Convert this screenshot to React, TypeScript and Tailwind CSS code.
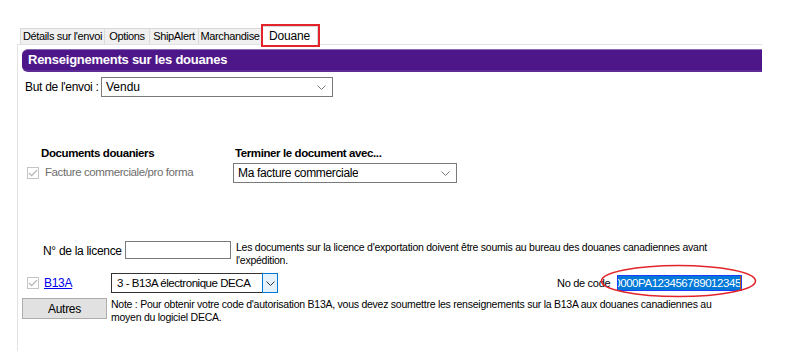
import React from "react";

const TABS = [
  { label: "Détails sur l'envoi", w: "w-[85px]" },
  { label: "Options", w: "w-[46px]" },
  { label: "ShipAlert", w: "w-[50px]" },
  { label: "Marchandise", w: "w-[64px]" },
];

const Chevron = ({ color = "#7a7a7a" }: { color?: string }) => (
  <svg width="9" height="5" viewBox="0 0 9 5" className="block">
    <path d="M0.5 0.5 L4.5 4.5 L8.5 0.5" fill="none" stroke={color} strokeWidth="1" />
  </svg>
);

const Select = ({ value, className }: { value: string; className: string }) => (
  <div className={`flex items-center justify-between border border-[#7a7a7a] bg-white pl-[4px] pr-[6px] text-[12px] text-black shrink-0 ${className}`}>
    <span className="truncate">{value}</span>
    <Chevron />
  </div>
);

const DisabledCheck = () => (
  <div className="w-[12px] h-[12px] border border-[#c4c4c4] bg-white flex items-center justify-center shrink-0">
    <svg width="10" height="8" viewBox="0 0 10 8">
      <path d="M1 4 L3.7 6.7 L9 1.2" fill="none" stroke="#b2b2b2" strokeWidth="1.2" />
    </svg>
  </div>
);

export default function App() {
  return (
    <div className="relative w-[787px] h-[363px] bg-white overflow-hidden text-black" style={{ fontFamily: '"Liberation Sans", Arial, sans-serif' }}>
      {/* tab strip */}
      <div className="flex items-end h-[44px] pl-[20px]">
        {TABS.map((t) => (
          <div
            key={t.label}
            className={`${t.w} h-[16px] flex items-center justify-center border border-b-0 border-[#d9d9d9] -ml-px first:ml-0 bg-[#f0f0f0] text-[11px] tracking-[-0.35px] leading-none whitespace-nowrap`}
          >
            {t.label}
          </div>
        ))}
        <div className="relative w-[57px] h-[19px] -ml-px mb-[-1px] flex items-center justify-center border border-b-0 border-[#d9d9d9] bg-white text-[12px] tracking-[-0.2px] leading-none z-10">
          Douane
          <span className="absolute left-[-1px] top-[-3px] w-[59px] h-[23px] border-2 border-[#e3242b]" />
        </div>
      </div>

      {/* panel */}
      <div className="ml-[17px] w-[745px] h-[307px] border-l border-t border-[#e3e3e3]">
        <div className="ml-[4px] mt-[4px] h-[23px] rounded-l-[6px] bg-[#4e1789] border-t border-[#8d6cb3] border-b-2 border-b-[#5d2b96] flex items-center pl-[6px]">
          <span className="text-white font-bold text-[13px] tracking-[-0.25px] whitespace-nowrap">Renseignements sur les douanes</span>
        </div>

        {/* But de l'envoi */}
        <div className="flex items-center mt-[5px] h-[20px]">
          <span className="ml-[7px] w-[76px] shrink-0 text-[12px] tracking-[-0.3px] whitespace-nowrap">But de l'envoi :</span>
          <Select value="Vendu" className="w-[232px] h-[20px]" />
        </div>

        {/* Documents */}
        <div className="flex mt-[50px] h-[14px] items-center text-[11.5px] font-bold tracking-[-0.4px] whitespace-nowrap">
          <span className="ml-[23px] w-[194px] shrink-0">Documents douaniers</span>
          <span>Terminer le document avec...</span>
        </div>
        <div className="flex items-center mt-[2px] h-[20px]">
          <div className="ml-[9px]">
            <DisabledCheck />
          </div>
          <span className="ml-[6px] w-[188px] shrink-0 text-[11.5px] text-[#6d6d6d] tracking-[-0.4px] whitespace-nowrap">Facture commerciale/pro forma</span>
          <Select value="Ma facture commerciale" className="w-[224px] h-[20px] text-[11.5px] tracking-[-0.35px]" />
        </div>

        {/* Licence */}
        <div className="flex items-start mt-[58px]">
          <span className="ml-[25px] w-[82px] shrink-0 mt-[1px] text-[12px] tracking-[-0.3px] leading-[18px] whitespace-nowrap">N° de la licence</span>
          <div className="w-[106px] h-[18px] shrink-0 border border-[#7a7a7a] bg-white" />
          <p className="ml-[5px] w-[520px] text-[10.5px] leading-[13px] tracking-[-0.25px]">
            Les documents sur la licence d'exportation doivent être soumis au bureau des douanes canadiennes avant l'expédition.
          </p>
        </div>

        {/* B13A */}
        <div className="flex items-center mt-[6px] h-[20px]">
          <div className="ml-[9px]">
            <DisabledCheck />
          </div>
          <span className="ml-[5px] w-[67px] shrink-0 text-[12px] text-[#0000ee] underline tracking-[-0.3px]">B13A</span>
          <div className="w-[167px] h-[20px] shrink-0 flex border border-[#333] bg-white">
            <span className="flex-1 pl-[5px] text-[11.5px] tracking-[-0.45px] leading-[18px] whitespace-nowrap">3 - B13A électronique DECA</span>
            <div className="w-[16px] h-[20px] -mt-px -mr-px flex items-center justify-center border border-[#0078d7] bg-[#e5f1fb]">
              <Chevron color="#333" />
            </div>
          </div>
          <span className="ml-[279px] shrink-0 text-[11px] tracking-[-0.3px] whitespace-nowrap">No de code</span>
          <div className="relative ml-[7px] w-[125px] h-[16px] shrink-0 border border-[#1f3dff] bg-[#0078d7] overflow-hidden">
            <span className="absolute left-[-4px] top-0 whitespace-nowrap text-white text-[11.5px] leading-[14px] tracking-[-0.45px]">
              0000PA1234567890123456
            </span>
            <span className="absolute right-0 top-0 w-px h-[14px] bg-[#c55a11]" />
          </div>
        </div>

        {/* Autres + note */}
        <div className="flex items-start mt-[5px]">
          <button className="ml-[4px] w-[85px] h-[21px] shrink-0 border border-[#adadad] bg-[#e1e1e1] text-[12px] tracking-[-0.3px]">
            Autres
          </button>
          <p className="ml-[4px] w-[610px] text-[10.5px] leading-[13px] tracking-[-0.25px]">
            Note : Pour obtenir votre code d'autorisation B13A, vous devez soumettre les renseignements sur la B13A aux douanes canadiennes au moyen du logiciel DECA.
          </p>
        </div>
      </div>

      {/* red highlight around the code field */}
      <svg className="absolute left-[600px] top-[264px]" width="157" height="34" viewBox="0 0 157 34">
        <ellipse cx="78.5" cy="17" rx="77" ry="15.5" fill="none" stroke="#e3242b" strokeWidth="1.6" />
      </svg>
    </div>
  );
}
